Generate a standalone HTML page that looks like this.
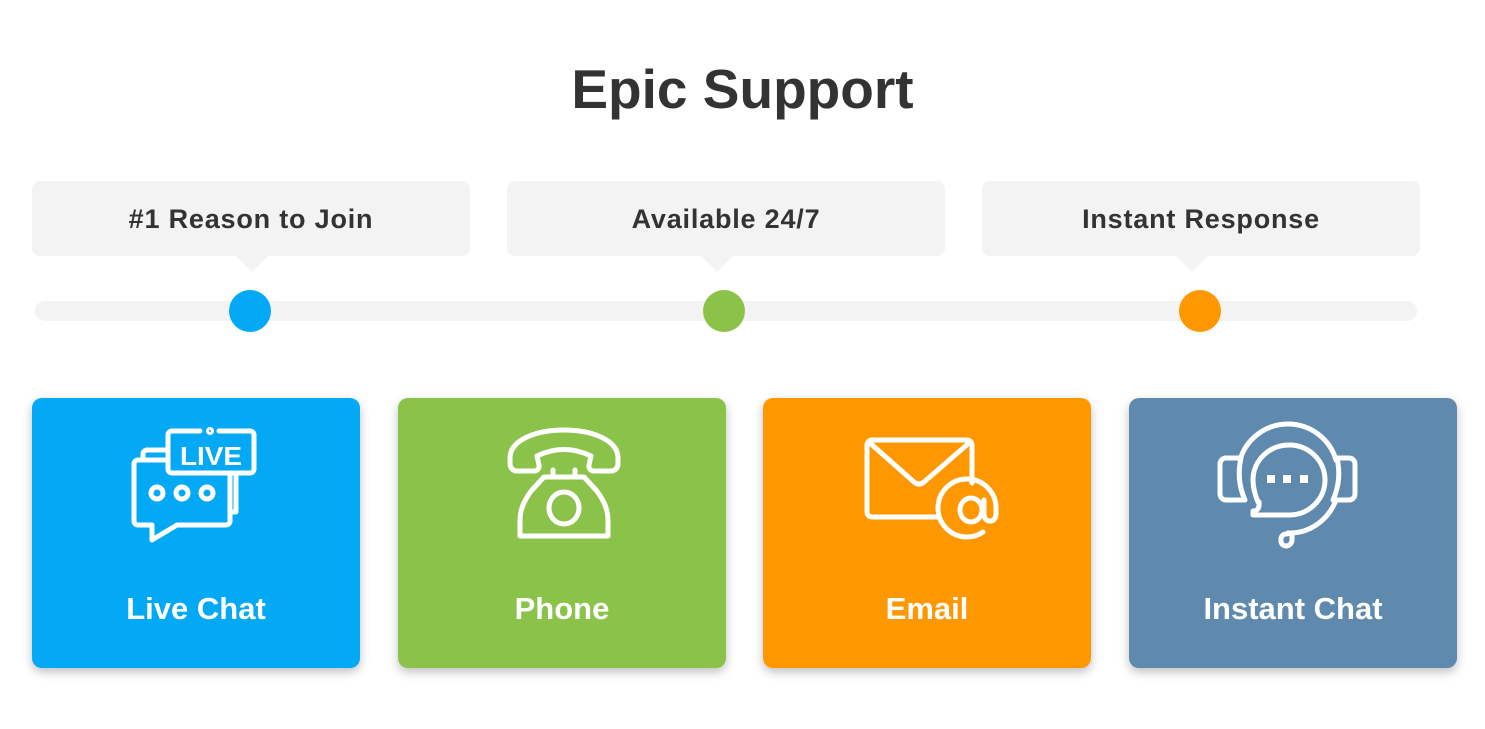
<!DOCTYPE html>
<html><head><meta charset="utf-8"><style>
*{margin:0;padding:0;box-sizing:border-box}
body{width:1485px;height:729px;background:#fff;position:relative;overflow:hidden;font-family:"Liberation Sans",sans-serif;font-weight:bold}
h1{position:absolute;top:57px;left:0;width:1485px;text-align:center;font-size:55px;color:#333;letter-spacing:0}
.b{position:absolute;top:181px;width:438px;height:75px;background:#f3f3f3;border-radius:8px;text-align:center;line-height:76px;font-size:27px;letter-spacing:0.8px;color:#333}
.b:after{content:"";position:absolute;bottom:-16px;left:var(--p);margin-left:-16px;border-left:16px solid transparent;border-right:16px solid transparent;border-top:16px solid #f3f3f3}
.track{position:absolute;left:35px;top:301px;width:1382px;height:20px;border-radius:10px;background:#f3f3f3}
.d{position:absolute;width:42px;height:42px;border-radius:50%;top:290px}
.c{position:absolute;top:398px;width:328px;height:270px;border-radius:10px;box-shadow:0 4px 10px rgba(0,0,0,.25);color:#fff;font-size:31px;text-align:center}
.c span{position:absolute;left:0;right:0;top:193px}
svg{position:absolute;left:0;top:0}
</style></head><body>
<h1>Epic Support</h1>
<div class="b" style="left:32px;--p:220px">#1 Reason to Join</div>
<div class="b" style="left:507px;--p:210px">Available 24/7</div>
<div class="b" style="left:982px;--p:210px">Instant Response</div>
<div class="track"></div>
<div class="d" style="left:229px;background:#03a9f4"></div>
<div class="d" style="left:703px;background:#8bc34a"></div>
<div class="d" style="left:1179px;background:#ff9800"></div>
<div class="c" style="left:32px;background:#03a9f4"><span>Live Chat</span></div>
<div class="c" style="left:398px;background:#8bc34a"><span>Phone</span></div>
<div class="c" style="left:763px;background:#ff9800"><span>Email</span></div>
<div class="c" style="left:1129px;background:#5f8aae"><span>Instant Chat</span></div>
<svg width="1485" height="729" fill="none" stroke="#fff" stroke-width="5" stroke-linejoin="round" stroke-linecap="round">
<!-- live chat -->
<path d="M168 460 H138 a4 4 0 0 0 -4 4 V521 a4 4 0 0 0 4 4 H152 V540 L177 525 H226 a4 4 0 0 0 4 -4 V473"/>
<path d="M168 450 H147 a4 4 0 0 0 -4 4 V460"/>
<path d="M236 473 V512 H230"/>
<path d="M200 431 H172 a4 4 0 0 0 -4 4 V469 a4 4 0 0 0 4 4 H250 a4 4 0 0 0 4 -4 V435 a4 4 0 0 0 -4 -4 H219"/>
<circle cx="210" cy="431" r="1.5"/>
<text x="211" y="465" fill="#fff" stroke="none" font-family="Liberation Sans" font-weight="bold" font-size="26" text-anchor="middle" textLength="62" lengthAdjust="spacingAndGlyphs">LIVE</text>
<circle cx="157" cy="493" r="6"/><circle cx="182" cy="493" r="6"/><circle cx="207" cy="493" r="6"/>
<!-- phone -->
<path d="M517 471 H535 a5 5 0 0 0 4 -6 l-2 -9 q27 -13 54 0 l-2 9 a5 5 0 0 0 4 6 H611 a7 7 0 0 0 7 -7 V458 C618 440 592 430 564 430 C536 430 510 440 510 458 V464 a7 7 0 0 0 7 7 Z"/>
<path d="M553 477 V470 M575 477 V470"/>
<path d="M544 477 H584 L596 490 Q608 505 608 520 V536 H520 V520 Q520 505 532 490 Z"/>
<ellipse cx="564" cy="508" rx="15" ry="16"/>
<!-- email -->
<path d="M938 517 H872 a5 5 0 0 1 -5 -5 V445 a5 5 0 0 1 5 -5 H967 a5 5 0 0 1 5 5 V483"/>
<path d="M870 443 L914 482 q5 4 10 0 L969 443"/>
<path d="M983 532 Q976 537 967 537 A29 29 0 1 1 996 508 V513 q0 8 -6 8 q-6 0 -6 -8 V500"/>
<ellipse cx="971" cy="510" rx="11" ry="12"/>
<!-- headset -->
<path d="M1258 502 Q1253 490 1253 480 A36 35 0 1 1 1289 515 H1253 V511 q7 0 6 -9"/>
<path d="M1240 460 A50 50 0 0 1 1336 460 M1336 500 A50 52 0 0 1 1288 533"/>
<path d="M1245 500 H1226 a6 6 0 0 1 -6 -6 V464 a6 6 0 0 1 6 -6 H1241 Q1236 480 1245 500 Z"/>
<path d="M1333 500 H1349 a6 6 0 0 0 6 -6 V464 a6 6 0 0 0 -6 -6 H1337 Q1342 480 1333 500 Z"/>
<path d="M1292 533 V540 a6 6 0 0 1 -6 6 a5 5 0 0 1 -5 -5 V539 a5 5 0 0 1 5 -5 Z"/>
<g fill="#fff" stroke="none"><rect x="1267" y="475" width="8" height="8"/><rect x="1283" y="475" width="8" height="8"/><rect x="1300" y="475" width="8" height="8"/></g>
</svg>
</body></html>
